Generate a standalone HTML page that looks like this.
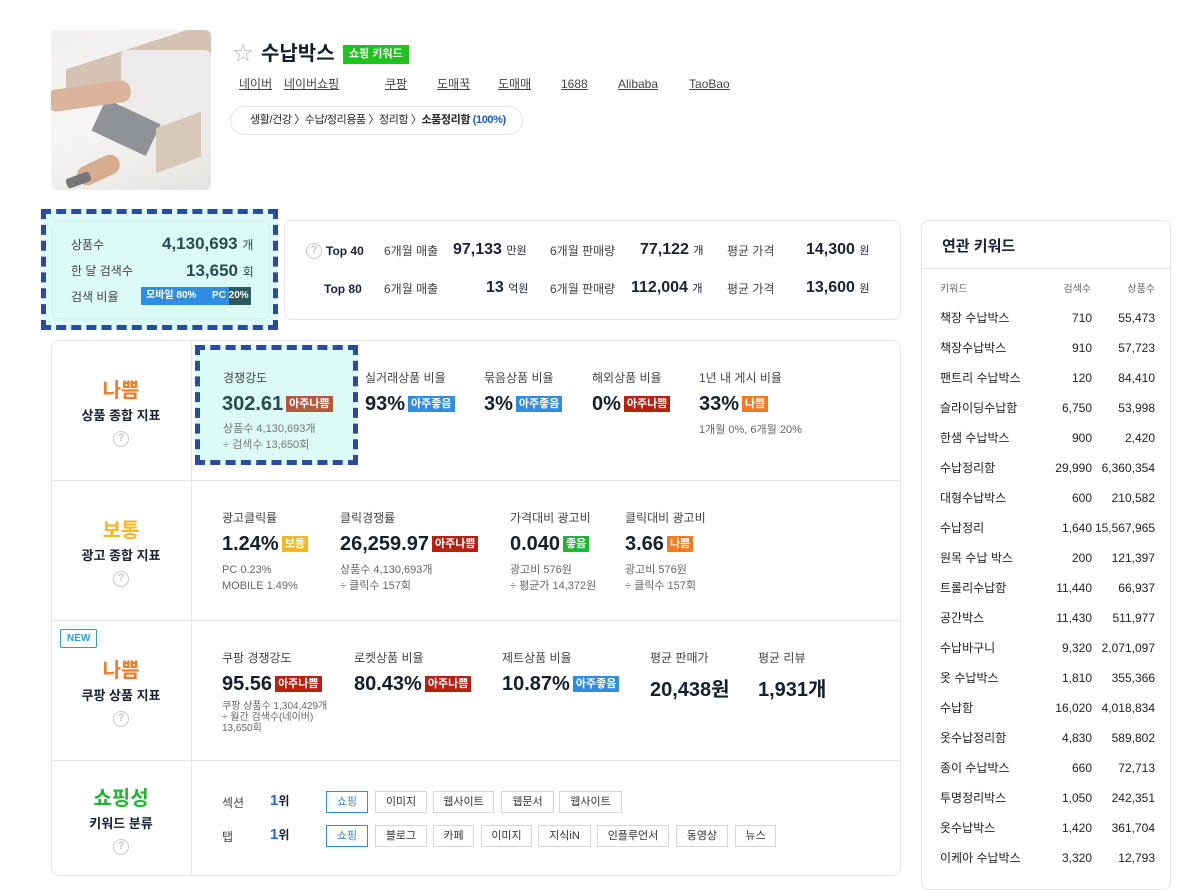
<!DOCTYPE html>
<html><head><meta charset="utf-8">
<style>
*{margin:0;padding:0;box-sizing:border-box}
body{width:1194px;height:878px;overflow:hidden;background:#fff;font-family:"Liberation Sans","Noto Sans CJK KR",sans-serif;color:#1a2233;position:relative}
.a{position:absolute;white-space:nowrap}
.card{position:absolute;border:1px solid #e3e5ec;border-radius:8px;background:#fff}
.lbl{font-size:12px;color:#444}
.big{font-size:20px;font-weight:bold;color:#15202e}
.tag{display:inline-block;font-size:11px;font-weight:bold;color:#fff;padding:1px 3px;line-height:14px;vertical-align:3px;margin-left:3px}
.r{background:#b8200f}.b{background:#2f8de4}.o{background:#f47a22}.g{background:#22b532}.y{background:#f6b81d}.br{background:#b5593e}
.sub{font-size:11px;color:#666;line-height:16px}
.q{width:16px;height:16px;border:1.5px solid #c6c8cc;border-radius:50%;font-size:11px;color:#c6c8cc;text-align:center;line-height:13px;font-weight:bold}
.hl{position:absolute;height:1px;background:#e3e5ec}
.chip{position:absolute;border:1px solid #d5d7dd;font-size:11px;color:#333;height:22px;line-height:20px;text-align:center}
.kw{position:absolute;left:940px;width:215px;font-size:12px;color:#222;height:16px;line-height:16px}
.kw span{position:absolute;top:0;line-height:16px}
.lk{position:absolute;top:76px;font-size:12px;color:#444;text-decoration:underline;line-height:16px;height:16px}
</style></head><body>

<!-- product image -->
<div class="a" style="left:51px;top:30px;width:160px;height:160px;border-radius:6px;overflow:hidden;background:linear-gradient(160deg,#f1f0ee,#f7f6f4 50%,#e6e4e1 100%)">
 <div class="a" style="left:15px;top:15px;width:150px;height:40px;background:#d4c3b3;transform:skewY(-18deg)"></div>
 <div class="a" style="left:70px;top:20px;width:90px;height:100px;background:#ecebea;border-radius:6px"></div>
 <div class="a" style="left:45px;top:80px;width:60px;height:35px;background:#8f9296;transform:rotate(25deg)"></div>
 <div class="a" style="left:-5px;top:55px;width:85px;height:22px;background:#d9b49a;border-radius:10px;transform:rotate(-8deg)"></div>
 <div class="a" style="left:25px;top:130px;width:45px;height:20px;background:#d7ad92;border-radius:10px;transform:rotate(-25deg)"></div>
 <div class="a" style="left:105px;top:90px;width:45px;height:45px;background:#d8c8b8;transform:skewY(-20deg)"></div>
 <div class="a" style="left:15px;top:145px;width:25px;height:10px;background:#777;border-radius:3px;transform:rotate(-20deg)"></div>
</div>

<div class="a" style="left:233px;top:42px;font-size:20px;color:#b5b8bf;line-height:24px">☆</div>
<div class="a" style="left:261px;top:41px;font-size:20px;font-weight:bold;color:#152030;line-height:26px">수납박스</div>
<div class="a" style="left:343px;top:45px;background:#1ec31e;color:#fff;font-size:11px;font-weight:bold;padding:1px 6px;line-height:17px">쇼핑 키워드</div>
<div class="lk" style="left:239px">네이버</div>
<div class="lk" style="left:284px">네이버쇼핑</div>
<div class="lk" style="left:385px">쿠팡</div>
<div class="lk" style="left:437px">도매꾹</div>
<div class="lk" style="left:498px">도매매</div>
<div class="lk" style="left:561px">1688</div>
<div class="lk" style="left:618px">Alibaba</div>
<div class="lk" style="left:689px">TaoBao</div>
<div class="a" style="left:230px;top:106px;width:293px;height:29px;border:1px solid #e3e5ec;border-radius:15px;font-size:11px;line-height:27px;padding-left:19px;color:#222;letter-spacing:-0.4px">생활/건강 〉수납/정리용품 〉정리함 〉<b>소품정리함</b> <b style="color:#1a5bd8">(100%)</b></div>

<!-- stats box -->
<div class="a" style="left:41px;top:209px;width:237px;height:121px;border:5px dashed #2a4c9c;background:#dcfbf6"></div>
<div class="card" style="left:52px;top:221px;width:218px;height:98px;background:#dcfbf6;border-color:#cfeee9"></div>
<div class="a lbl" style="left:71px;top:236px">상품수</div>
<div class="a" style="left:162px;top:234px;font-size:17px;font-weight:bold;color:#2a4a52">4,130,693 <span style="font-size:12px;font-weight:normal">개</span></div>
<div class="a lbl" style="left:71px;top:262px">한 달 검색수</div>
<div class="a" style="left:186px;top:261px;font-size:17px;font-weight:bold;color:#2a4a52">13,650 <span style="font-size:12px;font-weight:normal">회</span></div>
<div class="a lbl" style="left:71px;top:288px">검색 비율</div>
<div class="a" style="left:141px;top:287px;width:110px;height:18px;background:#2f8de4;font-size:10px;font-weight:bold;color:#fff;line-height:18px">
 <div class="a" style="left:88px;top:0;width:22px;height:18px;background:#2c5a5e"></div>
 <span class="a" style="left:5px">모바일 80%</span><span class="a" style="left:71px">PC 20%</span></div>

<!-- top40 box -->
<div class="card" style="left:284px;top:220px;width:617px;height:100px"></div>
<div class="a q" style="left:306px;top:243px">?</div>
<div class="a" style="left:326px;top:244px;font-size:12px;font-weight:bold">Top 40</div>
<div class="a" style="left:324px;top:282px;font-size:12px;font-weight:bold">Top 80</div>
<div class="a lbl" style="left:384px;top:242px">6개월 매출</div>
<div class="a lbl" style="left:384px;top:280px">6개월 매출</div>
<div class="a" style="left:453px;top:241px;font-size:16px;font-weight:bold">97,133 <span style="font-size:11px;font-weight:normal">만원</span></div>
<div class="a" style="left:486px;top:279px;font-size:16px;font-weight:bold">13 <span style="font-size:11px;font-weight:normal">억원</span></div>
<div class="a lbl" style="left:550px;top:242px">6개월 판매량</div>
<div class="a lbl" style="left:550px;top:280px">6개월 판매량</div>
<div class="a" style="left:640px;top:241px;font-size:16px;font-weight:bold">77,122 <span style="font-size:11px;font-weight:normal">개</span></div>
<div class="a" style="left:631px;top:279px;font-size:16px;font-weight:bold">112,004 <span style="font-size:11px;font-weight:normal">개</span></div>
<div class="a lbl" style="left:727px;top:242px">평균 가격</div>
<div class="a lbl" style="left:727px;top:280px">평균 가격</div>
<div class="a" style="left:806px;top:241px;font-size:16px;font-weight:bold">14,300 <span style="font-size:11px;font-weight:normal">원</span></div>
<div class="a" style="left:806px;top:279px;font-size:16px;font-weight:bold">13,600 <span style="font-size:11px;font-weight:normal">원</span></div>

<!-- main card -->
<div class="card" style="left:51px;top:340px;width:850px;height:536px"></div>
<div class="a" style="left:191px;top:341px;width:1px;height:534px;background:#e3e5ec"></div>
<div class="hl" style="left:52px;top:480px;width:848px"></div>
<div class="hl" style="left:52px;top:620px;width:848px"></div>
<div class="hl" style="left:52px;top:760px;width:848px"></div>

<!-- left labels -->
<div class="a" style="left:51px;top:374px;width:140px;text-align:center;font-size:20px;font-weight:bold;color:#f47a22">나쁨</div>
<div class="a" style="left:51px;top:405px;width:140px;text-align:center;font-size:13px;font-weight:bold">상품 종합 지표</div>
<div class="a q" style="left:113px;top:431px">?</div>
<div class="a" style="left:51px;top:514px;width:140px;text-align:center;font-size:20px;font-weight:bold;color:#f6b81d">보통</div>
<div class="a" style="left:51px;top:545px;width:140px;text-align:center;font-size:13px;font-weight:bold">광고 종합 지표</div>
<div class="a q" style="left:113px;top:571px">?</div>
<div class="a" style="left:60px;top:629px;border:1px solid #2aa0d8;border-radius:2px;font-size:10px;font-weight:bold;color:#2aa0d8;padding:1px 6px;line-height:15px">NEW</div>
<div class="a" style="left:51px;top:654px;width:140px;text-align:center;font-size:20px;font-weight:bold;color:#f47a22">나쁨</div>
<div class="a" style="left:51px;top:685px;width:140px;text-align:center;font-size:13px;font-weight:bold">쿠팡 상품 지표</div>
<div class="a q" style="left:113px;top:711px">?</div>
<div class="a" style="left:51px;top:782px;width:140px;text-align:center;font-size:20px;font-weight:bold;color:#22b532">쇼핑성</div>
<div class="a" style="left:51px;top:813px;width:140px;text-align:center;font-size:13px;font-weight:bold">키워드 분류</div>
<div class="a q" style="left:113px;top:839px">?</div>

<!-- row1 -->
<div class="a" style="left:195px;top:345px;width:163px;height:120px;border:5px dashed #2a4c9c;background:#dcfbf6"></div>
<div class="a lbl" style="left:223px;top:369px">경쟁강도</div>
<div class="a" style="left:222px;top:393px;font-size:20px;font-weight:bold;color:#2a4a52">302.61<span class="tag br" style="font-size:11px">아주나쁨</span></div>
<div class="a sub" style="left:223px;top:421px;color:#777">상품수 4,130,693개<br>÷ 검색수 13,650회</div>
<div class="a lbl" style="left:365px;top:369px">실거래상품 비율</div>
<div class="a big" style="left:365px;top:393px">93%<span class="tag b">아주좋음</span></div>
<div class="a lbl" style="left:484px;top:369px">묶음상품 비율</div>
<div class="a big" style="left:484px;top:393px">3%<span class="tag b">아주좋음</span></div>
<div class="a lbl" style="left:592px;top:369px">해외상품 비율</div>
<div class="a big" style="left:592px;top:393px">0%<span class="tag r">아주나쁨</span></div>
<div class="a lbl" style="left:699px;top:369px">1년 내 게시 비율</div>
<div class="a big" style="left:699px;top:393px">33%<span class="tag o">나쁨</span></div>
<div class="a sub" style="left:699px;top:422px">1개월 0%, 6개월 20%</div>

<!-- row2 -->
<div class="a lbl" style="left:222px;top:509px">광고클릭률</div>
<div class="a big" style="left:222px;top:533px">1.24%<span class="tag y">보통</span></div>
<div class="a sub" style="left:222px;top:562px">PC 0.23%<br>MOBILE 1.49%</div>
<div class="a lbl" style="left:340px;top:509px">클릭경쟁률</div>
<div class="a big" style="left:340px;top:533px">26,259.97<span class="tag r">아주나쁨</span></div>
<div class="a sub" style="left:340px;top:562px">상품수 4,130,693개<br>÷ 클릭수 157회</div>
<div class="a lbl" style="left:510px;top:509px">가격대비 광고비</div>
<div class="a big" style="left:510px;top:533px">0.040<span class="tag g">좋음</span></div>
<div class="a sub" style="left:510px;top:562px">광고비 576원<br>÷ 평균가 14,372원</div>
<div class="a lbl" style="left:625px;top:509px">클릭대비 광고비</div>
<div class="a big" style="left:625px;top:533px">3.66<span class="tag o">나쁨</span></div>
<div class="a sub" style="left:625px;top:562px">광고비 576원<br>÷ 클릭수 157회</div>

<!-- row3 -->
<div class="a lbl" style="left:222px;top:649px">쿠팡 경쟁강도</div>
<div class="a big" style="left:222px;top:673px">95.56<span class="tag r">아주나쁨</span></div>
<div class="a" style="left:222px;top:701px;font-size:10px;color:#666;line-height:11px">쿠팡 상품수 1,304,429개<br>÷ 월간 검색수(네이버)<br>13,650회</div>
<div class="a lbl" style="left:354px;top:649px">로켓상품 비율</div>
<div class="a big" style="left:354px;top:673px">80.43%<span class="tag r">아주나쁨</span></div>
<div class="a lbl" style="left:502px;top:649px">제트상품 비율</div>
<div class="a big" style="left:502px;top:673px">10.87%<span class="tag b">아주좋음</span></div>
<div class="a lbl" style="left:650px;top:649px">평균 판매가</div>
<div class="a big" style="left:650px;top:673px">20,438원</div>
<div class="a lbl" style="left:758px;top:649px">평균 리뷰</div>
<div class="a big" style="left:758px;top:673px">1,931개</div>

<!-- row4 -->
<div class="a lbl" style="left:222px;top:794px">섹션</div>
<div class="a" style="left:270px;top:792px;font-size:15px;font-weight:bold;color:#1a6ad8">1<span style="font-size:12px;color:#1a2233">위</span></div>
<div class="chip" style="left:326px;top:791px;width:42px;border-color:#2f8de4;color:#2f8de4">쇼핑</div>
<div class="chip" style="left:375px;top:791px;width:52px">이미지</div>
<div class="chip" style="left:433px;top:791px;width:61px">웹사이트</div>
<div class="chip" style="left:501px;top:791px;width:53px">웹문서</div>
<div class="chip" style="left:559px;top:791px;width:63px">웹사이트</div>
<div class="a lbl" style="left:222px;top:828px">탭</div>
<div class="a" style="left:270px;top:826px;font-size:15px;font-weight:bold;color:#1a6ad8">1<span style="font-size:12px;color:#1a2233">위</span></div>
<div class="chip" style="left:326px;top:825px;width:42px;border-color:#2f8de4;color:#2f8de4">쇼핑</div>
<div class="chip" style="left:375px;top:825px;width:52px">블로그</div>
<div class="chip" style="left:433px;top:825px;width:41px">카페</div>
<div class="chip" style="left:481px;top:825px;width:51px">이미지</div>
<div class="chip" style="left:538px;top:825px;width:53px">지식iN</div>
<div class="chip" style="left:597px;top:825px;width:72px">인플루언서</div>
<div class="chip" style="left:676px;top:825px;width:52px">동영상</div>
<div class="chip" style="left:735px;top:825px;width:41px">뉴스</div>

<!-- related keywords -->
<div class="card" style="left:921px;top:220px;width:250px;height:670px"></div>
<div class="hl" style="left:922px;top:268px;width:248px"></div>
<div class="a" style="left:942px;top:235px;font-size:15px;font-weight:bold">연관 키워드</div>
<div class="kw" style="top:282px;font-size:10px;color:#666"><span style="left:0">키워드</span><span style="right:64px">검색수</span><span style="right:0">상품수</span></div>
<div class="kw" style="top:310px"><span style="left:0">책장 수납박스</span><span style="right:63px">710</span><span style="right:0">55,473</span></div>
<div class="kw" style="top:340px"><span style="left:0">책장수납박스</span><span style="right:63px">910</span><span style="right:0">57,723</span></div>
<div class="kw" style="top:370px"><span style="left:0">팬트리 수납박스</span><span style="right:63px">120</span><span style="right:0">84,410</span></div>
<div class="kw" style="top:400px"><span style="left:0">슬라이딩수납함</span><span style="right:63px">6,750</span><span style="right:0">53,998</span></div>
<div class="kw" style="top:430px"><span style="left:0">한샘 수납박스</span><span style="right:63px">900</span><span style="right:0">2,420</span></div>
<div class="kw" style="top:460px"><span style="left:0">수납정리함</span><span style="right:63px">29,990</span><span style="right:0">6,360,354</span></div>
<div class="kw" style="top:490px"><span style="left:0">대형수납박스</span><span style="right:63px">600</span><span style="right:0">210,582</span></div>
<div class="kw" style="top:520px"><span style="left:0">수납정리</span><span style="right:63px">1,640</span><span style="right:0">15,567,965</span></div>
<div class="kw" style="top:550px"><span style="left:0">원목 수납 박스</span><span style="right:63px">200</span><span style="right:0">121,397</span></div>
<div class="kw" style="top:580px"><span style="left:0">트롤리수납함</span><span style="right:63px">11,440</span><span style="right:0">66,937</span></div>
<div class="kw" style="top:610px"><span style="left:0">공간박스</span><span style="right:63px">11,430</span><span style="right:0">511,977</span></div>
<div class="kw" style="top:640px"><span style="left:0">수납바구니</span><span style="right:63px">9,320</span><span style="right:0">2,071,097</span></div>
<div class="kw" style="top:670px"><span style="left:0">옷 수납박스</span><span style="right:63px">1,810</span><span style="right:0">355,366</span></div>
<div class="kw" style="top:700px"><span style="left:0">수납함</span><span style="right:63px">16,020</span><span style="right:0">4,018,834</span></div>
<div class="kw" style="top:730px"><span style="left:0">옷수납정리함</span><span style="right:63px">4,830</span><span style="right:0">589,802</span></div>
<div class="kw" style="top:760px"><span style="left:0">종이 수납박스</span><span style="right:63px">660</span><span style="right:0">72,713</span></div>
<div class="kw" style="top:790px"><span style="left:0">투명정리박스</span><span style="right:63px">1,050</span><span style="right:0">242,351</span></div>
<div class="kw" style="top:820px"><span style="left:0">옷수납박스</span><span style="right:63px">1,420</span><span style="right:0">361,704</span></div>
<div class="kw" style="top:850px"><span style="left:0">이케아 수납박스</span><span style="right:63px">3,320</span><span style="right:0">12,793</span></div>

</body></html>
